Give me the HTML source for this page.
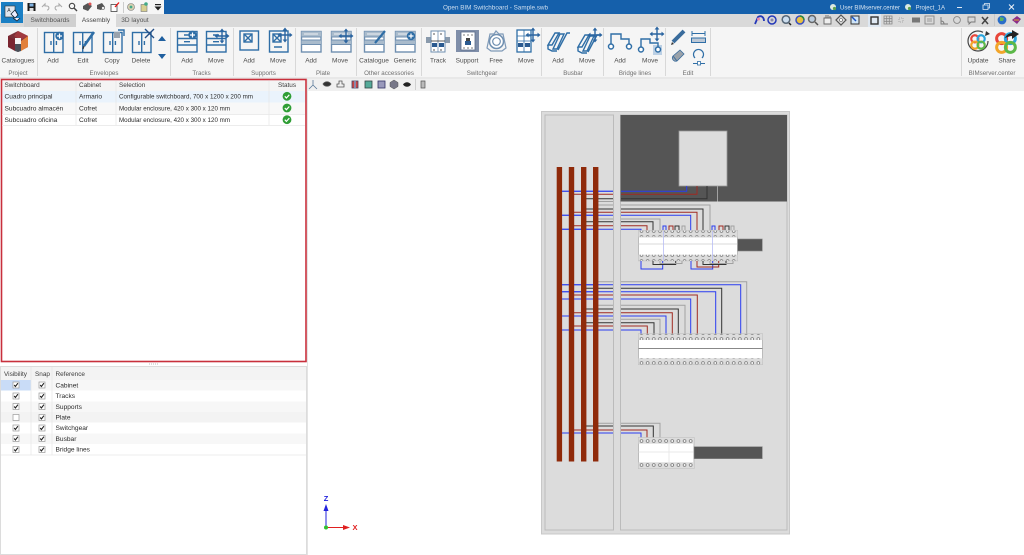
<!DOCTYPE html>
<html><head><meta charset="utf-8"><style>
html,body{margin:0;padding:0;background:#fff;width:1024px;height:555px;overflow:hidden}
svg{display:block;font-family:"Liberation Sans",sans-serif}
text{fill:#444;font-size:6.6px}
.rl{text-anchor:middle;fill:#4d4d4d;font-size:6.5px}
.gl{text-anchor:middle;fill:#707070;font-size:6.2px}
.i{fill:none;stroke:#2f6ea6;stroke-width:1.4}
.w{fill:#fff}
.th{fill:#3c3c3c;font-size:6.4px}
.td{fill:#2c2c2c;font-size:6.6px}
.g{fill:none;stroke:#a2a2a2;stroke-width:1}
.k{fill:none;stroke:#333;stroke-width:1}
.r{fill:none;stroke:#a02a22;stroke-width:1}
.b{fill:none;stroke:#2a3cf0;stroke-width:1}
</style></head><body>
<svg width="1024" height="555" viewBox="0 0 1024 555" xmlns="http://www.w3.org/2000/svg">
<defs>
<g id="door"><rect class="i" x=".5" y=".5" width="18.5" height="20" fill="#fff"/><path class="i" d="M9.7 .5V20.5M7 9V13M12.4 9V13"/></g>
<g id="plus"><circle r="4.2" fill="#2f6ea6"/><path d="M-2.5 0H2.5M0-2.5V2.5" stroke="#fff" stroke-width="1.2"/></g>
<g id="move"><path d="M-6 0H6M0-6V6" stroke="#2a64a0" stroke-width="1.4"/><path d="M0-7.5L-2.4-4.5H2.4ZM0 7.5L-2.4 4.5H2.4ZM-7.5 0L-4.5-2.4V2.4ZM7.5 0L4.5-2.4V2.4Z" fill="#2a64a0"/></g>
<g id="track"><rect class="i" x=".5" y=".5" width="19.5" height="20.5" fill="#fff"/><path class="i" d="M.5 7.5H20M.5 14H20M7 4H13M7 10.7H13"/></g>
<g id="plate"><rect x=".5" y=".5" width="19.5" height="20.5" fill="#fff" stroke="#6f8fb0" stroke-width="1.4"/><rect x=".5" y=".5" width="19.5" height="5.5" fill="#a9bbcc"/><rect x=".5" y="9" width="19.5" height="4.5" fill="#a9bbcc"/><path d="M.5 6H20M.5 9H20M.5 13.5H20" stroke="#6f8fb0"/><path d="M3 3H17" stroke="#fff" stroke-width=".8"/></g>
<g id="busb"><path class="i" d="M1 14L8 2H12L5 14ZM6 18L13 3H17L10 18ZM11 19L20 2H23"/><path class="i" d="M1 14V18L5 20H10"/></g>
<g id="rings" fill="none" stroke-width="2.4"><circle cx="-3.5" cy="-3.5" r="4" stroke="#e8463a"/><circle cx="3.5" cy="-3.5" r="4" stroke="#2aa4dc"/><circle cx="-3.5" cy="3.5" r="4" stroke="#f2a52a"/><circle cx="3.5" cy="3.5" r="4" stroke="#5cb848"/></g>
<g id="cb"><rect x="-3" y="-3" width="6" height="6" fill="#fff" stroke="#999" stroke-width=".7"/><path d="M-1.8 0L-.6 1.5L1.9-1.8" fill="none" stroke="#222" stroke-width="1.1"/></g>
<g id="ok"><circle r="4.4" fill="#2f9e35"/><path d="M-2.2 0L-.6 1.7L2.3-1.5" fill="none" stroke="#fff" stroke-width="1.2"/></g>
<pattern id="term" x="638.5" width="6.15" height="6" patternUnits="userSpaceOnUse"><circle cx="3" cy="3" r="1.4" fill="#fff" stroke="#777" stroke-width=".8"/></pattern>
</defs>

<!-- top bars -->
<rect width="1024" height="14" fill="#1560ab"/>
<rect width="164" height="14" fill="#f6f6f6"/>
<rect y="14" width="1024" height="13" fill="#d9d9d9"/>
<rect y="27" width="1024" height="50" fill="#f5f5f5"/>
<rect y="77" width="1024" height="2" fill="#e8e8e8"/>
<rect x="308" y="79" width="716" height="12" fill="#f0f0f0"/>
<rect x="76" y="14" width="40" height="13" fill="#f5f5f5"/>
<rect x="24" y="14" width="52" height="13" fill="#d0d0d0"/>

<!-- app button -->
<rect x="1" y="2" width="22" height="21" fill="#1a7fc4"/>
<rect x="5" y="6" width="10" height="11" fill="#dfe6ee" stroke="#333" stroke-width=".6"/>
<text x="7.2" y="12" style="font-size:5px;fill:#333">A</text>
<path d="M11 14L15 10L18 15L15 18ZM13 18L17 21L20 18" fill="#eef" stroke="#123" stroke-width=".8"/>

<!-- QAT -->
<rect x="27.500" y="3" width="8" height="8" fill="#1a1a1a"/><rect x="29.500" y="3.500" width="4" height="3" fill="#7fb0df"/><rect x="29.500" y="8" width="4" height="3" fill="#ddd"/>
<path d="M42 7L45 4V6H47C49.500 6 49.500 10 47 10" fill="none" stroke="#aaa" stroke-width="1.1"/>
<path d="M62 7L59 4V6H57C54.500 6 54.500 10 57 10" fill="none" stroke="#aaa" stroke-width="1.1"/>
<circle cx="72" cy="6" r="2.700" fill="none" stroke="#444" stroke-width="1.1"/><path d="M74 8L77 11" stroke="#444" stroke-width="1.400"/>
<path d="M83 6L88 3L92 6L88 11L83 9Z" fill="#555"/><circle cx="90" cy="4" r="1.500" fill="#d55"/>
<path d="M97 5L102 3L105 7L101 10L97 9Z" fill="#555"/><circle cx="103" cy="8" r="1.500" fill="#eee" stroke="#555" stroke-width=".6"/>
<rect x="111" y="4.500" width="6" height="7" fill="#fff" stroke="#444" stroke-width=".8"/><path d="M115 7L119 2.500" stroke="#e11" stroke-width="1.300"/>
<rect x="123" y="2" width="1" height="11" fill="#ccc"/>
<circle cx="131" cy="7" r="3.500" fill="#d8d0b0" stroke="#777" stroke-width=".6"/><circle cx="131" cy="7" r="1.400" fill="#4a8"/>
<rect x="141" y="4.500" width="6" height="7" fill="#d8cf90" stroke="#777" stroke-width=".6"/><circle cx="146" cy="4" r="1.800" fill="#4a8"/>
<rect x="155" y="4" width="6" height="1.200" fill="#222"/><path d="M154.500 6.500H161.500L158 10.500Z" fill="#222"/>

<text x="443" y="9.500" textLength="105" lengthAdjust="spacingAndGlyphs" style="fill:#cfdff0;font-size:6.8px">Open BIM Switchboard - Sample.swb</text>
<circle cx="833" cy="7" r="3" fill="#dce8e0"/><circle cx="834.500" cy="8.500" r="1.600" fill="#5aa050"/>
<text x="840" y="9.500" textLength="60" lengthAdjust="spacingAndGlyphs" style="fill:#d8e5f2;font-size:6.600px">User BIMserver.center</text>
<circle cx="908" cy="7" r="3" fill="#dce8e0"/><circle cx="909.500" cy="8.500" r="1.600" fill="#5aa050"/>
<text x="915.500" y="9.500" textLength="29.500" lengthAdjust="spacingAndGlyphs" style="fill:#d8e5f2;font-size:6.600px">Project_1A</text>
<path d="M957 7.500H962" stroke="#dfe9f4"/>
<path d="M983 5H988V9.500H983ZM984.500 5V3.500H989.500V8H988" fill="none" stroke="#dfe9f4" stroke-width=".8"/>
<path d="M1009 4.500L1014 9.500M1014 4.500L1009 9.500" stroke="#f0f4f9" stroke-width="1"/>

<!-- tabs -->
<text class="rl" x="50" y="22" style="fill:#555">Switchboards</text>
<text class="rl" x="96" y="22" style="fill:#444">Assembly</text>
<text class="rl" x="135" y="22" style="fill:#555">3D layout</text>

<!-- right toolbar icons -->
<rect x="868" y="14" width="13" height="13" fill="#dfe8f2"/>
<g fill="none" stroke-width="1.500">
<path d="M755 24L758 17C761 15 764 17 764 21" stroke="#2438b8" stroke-width="1.800"/><circle cx="758.500" cy="19" r="1.500" fill="#e8a"/>
<circle cx="772" cy="20" r="4" stroke="#2438b8"/><circle cx="772" cy="20" r="1.500" fill="#88a"/>
<circle cx="786" cy="19.500" r="3.800" stroke="#567" fill="#cde"/><path d="M789 23L791 25" stroke="#222"/>
<circle cx="800" cy="20" r="4" stroke="#3a4fc0" fill="#e8c040"/><path d="M800 16A4 4 0 0 1 804 20" stroke="#2a8a3a"/>
<circle cx="812" cy="19" r="3.500" stroke="#666" fill="#bcd"/><path d="M815 22L818 25" stroke="#555"/>
<path d="M824 24V18H831V24Z" stroke="#666" fill="#eee" stroke-width=".9"/><path d="M826 18V15M828 18V15M830 18V16" stroke="#666" stroke-width=".9"/>
<path d="M841 15L846 20L841 25L836 20Z" stroke="#555" stroke-width="1.200" fill="#ddd"/><circle cx="841" cy="20" r="1.500" fill="#fff" stroke="#555" stroke-width=".6"/>
<rect x="851" y="16" width="8" height="8" stroke="#333" stroke-width="1" fill="#cfe4f7"/><path d="M852 17L856 21" stroke="#1a50c0"/>
<rect x="871" y="17" width="7" height="7" stroke="#333" stroke-width="1.400"/>
<path d="M884 16H892V24H884ZM884 18.700H892M884 21.300H892M886.700 16V24M889.300 16V24" stroke="#888" stroke-width=".8"/>
<rect x="899" y="18" width="4" height="4" stroke="#999" stroke-width=".8" stroke-dasharray="1 1"/>
<rect x="912" y="17.500" width="8" height="5" fill="#777" stroke="none"/>
<rect x="925" y="16" width="9" height="8" stroke="#888" stroke-width=".9"/><path d="M927 19H932M927 21H932" stroke="#888" stroke-width=".8"/>
<path d="M941 17V24H948M941 21C943 21 944 22 944 24" stroke="#777" stroke-width=".9"/>
<circle cx="957" cy="20" r="3.400" stroke="#888" stroke-width=".9"/>
<path d="M968 17H975V22H971L969 24V22H968Z" stroke="#777" stroke-width=".9"/>
<path d="M982 17L988 24M988 17L982 24" stroke="#444" stroke-width="1.500"/>
</g>
<rect x="994" y="14" width="1" height="12" fill="#c8c8c8"/>
<circle cx="1002" cy="20" r="4.400" fill="#2a6ec8"/><path d="M1000 17L1004 18L1003 21L1000 21Z" fill="#5ab060"/>
<path d="M1012 20L1017 16L1021 19L1017 24Z" fill="#8a2d8a"/><path d="M1014 20H1019" stroke="#e0a030"/>

<!-- separators -->
<g fill="#d8d8d8">
<rect x="37" y="28" width="1" height="48"/><rect x="170" y="28" width="1" height="48"/><rect x="233" y="28" width="1" height="48"/><rect x="295" y="28" width="1" height="48"/><rect x="356" y="28" width="1" height="48"/><rect x="421" y="28" width="1" height="48"/><rect x="541" y="28" width="1" height="48"/><rect x="603" y="28" width="1" height="48"/><rect x="665" y="28" width="1" height="48"/><rect x="710" y="28" width="1" height="48"/><rect x="961" y="28" width="1" height="48"/>
</g>

<!-- catalogues -->
<path d="M18 31L28 36V47L18 52L8 47V36Z" fill="#7a3038"/>
<path d="M18 31L28 36L21 40L14 36Z" fill="#a13a40"/>
<path d="M28 36V47L21 51V41Z" fill="#e2803a"/>
<path d="M8 36L15 40V51L8 47Z" fill="#7a2530"/>
<path d="M15 40L21 41V51L18 52L15 51Z" fill="#4a4f58"/>
<rect x="15" y="38" width="6" height="6" fill="#f4f4f4"/>

<!-- envelopes -->
<use href="#door" x="44" y="32"/><use href="#plus" x="59.500" y="36"/>
<use href="#door" x="73" y="32"/><path d="M84 46L94 32" stroke="#2f6ea6" stroke-width="2.600"/><path d="M84 46L83 49" stroke="#333" stroke-width="1.200"/>
<use href="#door" x="103" y="32"/><rect x="114" y="32" width="6" height="6" fill="#9aa3ad"/><path d="M118 30H124V36" class="i"/>
<use href="#door" x="132" y="32"/><path d="M145 29L154 38M154 29L145 38" stroke="#244f86" stroke-width="1.400"/>
<path d="M162 36L166 41H158Z" fill="#1f5f9f"/><path d="M162 59L166 54H158Z" fill="#1f5f9f"/>
<!-- tracks -->
<use href="#track" x="177" y="31"/><use href="#plus" x="192.500" y="35"/>
<use href="#track" x="206" y="31"/><use href="#move" x="222" y="36"/>
<!-- supports -->
<rect class="i" x="240" y="31" width="18.500" height="19" fill="#fff"/><rect class="i" x="244" y="34" width="8" height="8"/><path class="i" d="M244 34L252 42M252 34L244 42"/>
<rect class="i" x="269.500" y="31" width="18.500" height="21" fill="#fff"/><rect class="i" x="273" y="34" width="8" height="8"/><path class="i" d="M273 34L281 42M281 34L273 42M274 47H282"/><use href="#move" x="285" y="35"/>
<!-- plate -->
<use href="#plate" x="301" y="31"/><use href="#plate" x="331" y="31"/><use href="#move" x="346" y="36"/>
<!-- other -->
<use href="#plate" x="364" y="31"/><path d="M375 43L385 31" stroke="#2f6ea6" stroke-width="2.200"/>
<use href="#plate" x="395" y="31"/><use href="#plus" x="411" y="36"/>
<!-- switchgear -->
<g id="brk">
<rect x="426" y="37" width="24" height="6" fill="#8a9aac"/>
<rect x="431" y="31" width="14" height="21" fill="#fff" stroke="#6f8fb0"/>
<path d="M438 31V52" stroke="#6f8fb0" stroke-width=".8"/>
<path d="M432 43H437V47H432ZM439 43H444V47H439Z" fill="#2a5a90"/><path d="M431 41H445" stroke="#333" stroke-width=".8"/>
<path d="M433 34H435M440 34H442M433 50H435M440 50H442" stroke="#555"/>
</g>
<rect x="456" y="30" width="23" height="22" fill="#7f8ea9"/>
<rect x="461" y="32" width="14" height="18" fill="#fff" stroke="#5a6c8a" stroke-width=".8"/>
<path d="M465 41H471V45H465Z" fill="#2a5a90"/><path d="M466 38H470V41H466Z" fill="#444"/><path d="M463 35H465M467 35H469M471 35H473M463 48H465M467 48H469M471 48H473" stroke="#555" stroke-width=".8"/>
<circle cx="496.500" cy="41.500" r="7" fill="#fff" stroke="#6f8fb0" stroke-width="1.500"/><circle cx="496.500" cy="41.500" r="3.800" fill="#fff" stroke="#6f8fb0" stroke-width="1.200"/>
<path d="M487 48L490 34H494L496 31L499 34H503L506 48L502 51H491Z" fill="none" stroke="#7f9ab8" stroke-width="1.200"/>
<rect x="517" y="30" width="14" height="22" fill="#fff" stroke="#2f6ea6" stroke-width="1.300"/><path d="M517 36H531M517 41H531M524 30V52" stroke="#2f6ea6" stroke-width=".8"/><path d="M518 43H523V47H518ZM525 43H530V47H525Z" fill="#2a5a90"/><use href="#move" x="533" y="35"/>
<!-- busbar -->
<use href="#busb" x="547" y="31"/><use href="#busb" x="577" y="33"/><use href="#move" x="595" y="35"/>
<!-- bridge -->
<path class="i" d="M611 46V34H621V39H629V46"/><circle cx="611" cy="46.500" r="2.500" fill="#fff" stroke="#2f6ea6" stroke-width="1.500"/><circle cx="629" cy="46.500" r="2.500" fill="#fff" stroke="#2f6ea6" stroke-width="1.500"/>
<rect x="653" y="45" width="9" height="10" fill="#bcd0e4"/>
<path class="i" d="M641 48V39H650V43H658V48"/><circle cx="641" cy="49.500" r="2.500" fill="#fff" stroke="#2f6ea6" stroke-width="1.500"/><circle cx="658" cy="49.500" r="2.500" fill="#fff" stroke="#2f6ea6" stroke-width="1.500"/><use href="#move" x="657" y="34"/>
<!-- edit -->
<path d="M673 42L684 31" stroke="#3a6c9c" stroke-width="4"/><path d="M671 45L672 42L674 44Z" fill="#333"/>
<path d="M673 56L680 50L684 54L677 61C674 62 671 59 673 56Z" fill="#9aa2aa" stroke="#3a6c9c" stroke-width=".8"/><path d="M673 56L677 61" stroke="#3a6c9c" fill="none"/>
<path d="M692 31V36M705 31V36M692 33.500H705" stroke="#2f6ea6"/><rect x="691.500" y="38" width="14" height="4.500" fill="#bcc8d6" stroke="#2f6ea6"/>
<path d="M695 58A5 5 0 1 1 702 58" fill="none" stroke="#2f6ea6" stroke-width="1.200"/><path d="M693 63.500H705" stroke="#2f6ea6"/><rect x="697.500" y="61.500" width="3" height="3.500" fill="#fff" stroke="#2f6ea6" stroke-width=".8"/>
<!-- bim -->
<circle cx="978" cy="41" r="10" fill="none" stroke="#444" stroke-width="1.200" stroke-dasharray="52 11"/>
<path d="M986 31L990 34L985 36Z" fill="#333"/>
<g transform="translate(978,42) scale(.9)"><use href="#rings"/></g>
<g transform="translate(1006,43) scale(1.250)"><use href="#rings"/></g>
<path d="M1005 38C1007 34 1010 33 1012 33V30L1019 34L1012 39V36C1010 36 1008 37 1005 38Z" fill="#222"/>

<!-- ribbon labels -->
<text class="rl" x="18" y="62.500">Catalogues</text>
<text class="rl" x="53" y="62.500">Add</text><text class="rl" x="83" y="62.500">Edit</text><text class="rl" x="112" y="62.500">Copy</text><text class="rl" x="141" y="62.500">Delete</text>
<text class="rl" x="187" y="62.500">Add</text><text class="rl" x="216" y="62.500">Move</text>
<text class="rl" x="249" y="62.500">Add</text><text class="rl" x="278" y="62.500">Move</text>
<text class="rl" x="311" y="62.500">Add</text><text class="rl" x="340" y="62.500">Move</text>
<text class="rl" x="374" y="62.500">Catalogue</text><text class="rl" x="405" y="62.500">Generic</text>
<text class="rl" x="438" y="62.500">Track</text><text class="rl" x="467" y="62.500">Support</text><text class="rl" x="496" y="62.500">Free</text><text class="rl" x="526" y="62.500">Move</text>
<text class="rl" x="558" y="62.500">Add</text><text class="rl" x="587" y="62.500">Move</text>
<text class="rl" x="620" y="62.500">Add</text><text class="rl" x="650" y="62.500">Move</text>
<text class="rl" x="978" y="62.500">Update</text><text class="rl" x="1007" y="62.500">Share</text>
<text class="gl" x="18" y="75">Project</text><text class="gl" x="104" y="75">Envelopes</text><text class="gl" x="201.500" y="75">Tracks</text><text class="gl" x="263.500" y="75">Supports</text><text class="gl" x="323" y="75">Plate</text><text class="gl" x="389" y="75">Other accessories</text><text class="gl" x="482" y="75">Switchgear</text><text class="gl" x="573" y="75">Busbar</text><text class="gl" x="635" y="75">Bridge lines</text><text class="gl" x="688" y="75">Edit</text><text class="gl" x="992" y="75">BIMserver.center</text>

<!-- view toolbar -->
<g fill="none" stroke="#555" stroke-width=".8">
<path d="M313 85V80M313 85L309 89M313 85L317 89" stroke="#5a7a9a"/>
<path d="M323 84C325 81 329 81 331 84C329 87 325 87 323 84Z" fill="#333"/>
<path d="M337 87H344V84H342V81H339V84H337Z"/>
</g>
<rect x="352" y="81" width="6" height="7" fill="#c44" stroke="#446" stroke-width=".8"/><rect x="354" y="81" width="2" height="7" fill="#88a"/>
<rect x="365" y="81" width="7" height="7" fill="#5a9" stroke="#344" stroke-width=".8"/>
<rect x="378" y="81" width="7" height="7" fill="#99b" stroke="#336" stroke-width=".8"/>
<path d="M394 80L398 82.500V86.500L394 89L390 86.500V82.500Z" fill="#778" stroke="#555" stroke-width=".5"/>
<path d="M403 84.500C405 81.500 409 81.500 411 84.500C409 87.500 405 87.500 403 84.500Z" fill="#222"/>
<rect x="415" y="79" width="1" height="11" fill="#d0d0d0"/>
<path d="M421 81H425V88H421Z" fill="#bbb" stroke="#555" stroke-width=".7"/>

<!-- panel 1 -->
<rect x="1.500" y="79.500" width="304.500" height="282" fill="#fff" stroke="#c8303c" stroke-width="1.600"/>
<rect x="2.500" y="80.500" width="302.500" height="10.500" fill="#f4f4f4"/>
<rect x="2.500" y="91" width="302.500" height="11.500" fill="#eaf3fc"/>
<rect x="2.500" y="102.500" width="302.500" height="11.500" fill="#f8f8f8"/>
<path d="M76 81V125M116 81V125M269 81V125M2 114.500H305M2 125.500H305" stroke="#e6e6e6" stroke-width=".7" fill="none"/>
<text class="th" x="4.500" y="87">Switchboard</text><text class="th" x="79" y="87">Cabinet</text><text class="th" x="119" y="87">Selection</text><text class="th" x="287" y="87" text-anchor="middle">Status</text>
<text class="td" x="4.500" y="98.500">Cuadro principal</text><text class="td" x="79" y="98.500">Armario</text><text class="td" x="119" y="98.500" textLength="134" lengthAdjust="spacingAndGlyphs">Configurable switchboard, 700 x 1200 x 200 mm</text>
<text class="td" x="4.500" y="110.300">Subcuadro almacén</text><text class="td" x="79" y="110.300">Cofret</text><text class="td" x="119" y="110.300" textLength="111" lengthAdjust="spacingAndGlyphs">Modular enclosure, 420 x 300 x 120 mm</text>
<text class="td" x="4.500" y="122">Subcuadro oficina</text><text class="td" x="79" y="122">Cofret</text><text class="td" x="119" y="122" textLength="111" lengthAdjust="spacingAndGlyphs">Modular enclosure, 420 x 300 x 120 mm</text>
<use href="#ok" x="287" y="96.300"/><use href="#ok" x="287" y="108"/><use href="#ok" x="287" y="119.700"/>
<path d="M149 364H158" stroke="#bbb" stroke-dasharray="1 1"/>
<rect x="307" y="79" width="1" height="476" fill="#e4e4e4"/>

<!-- panel 2 -->
<rect x=".5" y="366.500" width="306" height="188" fill="#fff" stroke="#dcdcdc"/>
<rect x="1" y="367" width="305" height="13" fill="#f3f3f3"/>
<rect x="1" y="380" width="30" height="10.500" fill="#c9dcf7"/>
<g fill="#f7f7f7"><rect x="31" y="380" width="275" height="10.500"/><rect x="1" y="401.500" width="305" height="10.500"/><rect x="1" y="412" width="305" height="10.500" fill="#f3f3f3"/><rect x="1" y="433.500" width="305" height="10.500"/></g>
<path d="M31 367V455M52 367V455M1 455H306" stroke="#e6e6e6" stroke-width=".7" fill="none"/>
<text class="th" x="4" y="376">Visibility</text><text class="th" x="35" y="376">Snap</text><text class="th" x="55.500" y="376">Reference</text>
<text class="td" x="55.500" y="387.500">Cabinet</text><text class="td" x="55.500" y="398">Tracks</text><text class="td" x="55.500" y="409">Supports</text><text class="td" x="55.500" y="419.500">Plate</text><text class="td" x="55.500" y="430">Switchgear</text><text class="td" x="55.500" y="441">Busbar</text><text class="td" x="55.500" y="451.500">Bridge lines</text>
<use href="#cb" x="16" y="385"/><use href="#cb" x="16" y="396"/><use href="#cb" x="16" y="406.500"/><rect x="13" y="414.500" width="6" height="6" fill="#fff" stroke="#999" stroke-width=".7"/><use href="#cb" x="16" y="428"/><use href="#cb" x="16" y="438.500"/><use href="#cb" x="16" y="449.500"/>
<use href="#cb" x="42" y="385"/><use href="#cb" x="42" y="396"/><use href="#cb" x="42" y="406.500"/><use href="#cb" x="42" y="417.500"/><use href="#cb" x="42" y="428"/><use href="#cb" x="42" y="438.500"/><use href="#cb" x="42" y="449.500"/>

<!-- axis -->
<path d="M326 527.500V508" stroke="#2222dd" stroke-width="1"/><path d="M326 504L323.500 511H328.500Z" fill="#2222dd"/>
<path d="M326 527.500H346" stroke="#e02020" stroke-width="1"/><path d="M350 527.500L343 525V530Z" fill="#e02020"/>
<circle cx="326" cy="527.500" r="2" fill="#30c030"/>
<text x="326" y="501" text-anchor="middle" style="font-size:7.500px;font-weight:bold;fill:#2222dd">Z</text>
<text x="355" y="530" text-anchor="middle" style="font-size:7.500px;font-weight:bold;fill:#e02020">X</text>

<!-- drawing -->
<rect x="541.500" y="111.500" width="248" height="422.500" fill="#dcdcdc" stroke="#c8c8c8"/>
<rect x="545" y="115" width="68.500" height="415" fill="#dcdcdc" stroke="#bbb"/>
<rect x="620.500" y="115" width="166.500" height="415" fill="#dcdcdc" stroke="#bbb"/>
<rect x="620.500" y="115" width="166.500" height="86.500" fill="#555"/>
<rect x="679" y="131" width="48" height="55" fill="#dcdcdc" stroke="#999" stroke-width=".8"/>

<!-- wires: upper -->
<path class="b" d="M559 191.300H613M621 191.300H686.700V186"/>
<path class="r" d="M574 194.300H613M621 194.300H697V186"/>
<path class="k" d="M586 198.700H613M621 198.700H707V186"/>
<path class="g" d="M598 201.500H613M717.500 186V201.500"/>
<path class="g" d="M598 205H613M621 205H710V231"/>
<path class="k" d="M586 209H613M621 209H703V231"/>
<path class="r" d="M574 212.300H613M621 212.300H697V231"/>
<path class="b" d="M562 215.300H613M621 215.300H690.700V231"/>
<path class="g" d="M598 219H613M621 219H660V231"/>
<path class="k" d="M586 221.700H613M621 221.700H653V231"/>
<path class="r" d="M574 225.700H613M621 225.700H647V231"/>
<path class="b" d="M562 229.300H613M621 229.300H641V231"/>
<path class="b" d="M663 230V226H666V230M712 230V226H715V230"/>
<path class="r" d="M669 230V226H673V230M719 230V226H723V230"/>
<path class="k" d="M675 230V226H679V230M725 230V226H729V230"/>
<path class="g" d="M682 230V226H685V230M731 230V226H734V230"/>
<!-- device 1 -->
<rect x="638.500" y="230.700" width="99" height="30" fill="#fff" stroke="#bbb"/>
<rect x="638.500" y="230.700" width="99" height="6" fill="#dcdcdc"/>
<rect x="638.500" y="254.700" width="99" height="6" fill="#dcdcdc"/>
<rect x="638.500" y="230.700" width="99" height="6" fill="url(#term)"/>
<rect x="638.500" y="254.700" width="99" height="6" fill="url(#term)"/>
<path d="M638.500 237H737.500M638.500 244H737.500" stroke="#ccc" stroke-width=".7"/>
<path d="M663.500 231V260M712.500 231V260" stroke="#b8bdf5" stroke-width=".8"/>
<rect x="737.700" y="239" width="24.600" height="12" fill="#555" stroke="#888" stroke-width=".6"/>
<path class="b" d="M641 261V269H662.700V261M691 261V269H712.700V261"/>
<path class="k" d="M653 261V264.500H675.700V261"/>
<path class="g" d="M660 261V263.500H682V261"/>
<path class="r" d="M697 261V267H718.700V261"/>
<path class="k" d="M703 261V264.500H726V261"/>
<path class="g" d="M710 261V263.500H733V261"/>

<!-- wires: middle -->
<path class="g" d="M597 281.700H613M621 281.700H746.700V334"/>
<path class="b" d="M562 284.700H613M621 284.700H740.700V334"/>
<path class="k" d="M586 288.300H613M621 288.300H721.700V334"/>
<path class="b" d="M562 291.700H613M621 291.700H715.700V334"/>
<path class="r" d="M574 295H613M621 295H697.300V334"/>
<path class="b" d="M562 299H613M621 299H690.700V334"/>
<path class="g" d="M597 305.300H613M621 305.300H685V334"/>
<path class="k" d="M586 309H613M621 309H678.300V334"/>
<path class="r" d="M574 312.700H613M621 312.700H672.300V334"/>
<path class="b" d="M562 316H613M621 316H666V334"/>
<path class="g" d="M597 319.300H613M621 319.300H660V334"/>
<path class="k" d="M586 322.700H613M621 322.700H654V334"/>
<path class="r" d="M574 326H613M621 326H647.300V334"/>
<path class="b" d="M562 330H613M621 330H641V334"/>
<!-- device 2 -->
<rect x="638.500" y="334" width="124" height="30.300" fill="#fff" stroke="#bbb"/>
<rect x="638.500" y="334" width="124" height="6" fill="#dcdcdc"/>
<rect x="638.500" y="358.300" width="124" height="6" fill="#dcdcdc"/>
<rect x="638.500" y="334" width="124" height="6" fill="url(#term)"/>
<rect x="638.500" y="358.300" width="124" height="6" fill="url(#term)"/>
<path d="M638.500 348.500H762.500" stroke="#888" stroke-width="1"/>

<!-- wires: lower -->
<path class="g" d="M597 423.300H613M621 423.300H660V438"/>
<path class="k" d="M586 426H613M621 426H653.300V438"/>
<path class="r" d="M574 430H613M621 430H647V438"/>
<path class="b" d="M562 433H613M621 433H641V438"/>
<!-- device 3 -->
<rect x="638.500" y="437.700" width="55.500" height="30.600" fill="#fff" stroke="#bbb"/>
<rect x="638.500" y="437.700" width="55.500" height="6" fill="#dcdcdc"/>
<rect x="638.500" y="462.300" width="55.500" height="6" fill="#dcdcdc"/>
<rect x="638.500" y="437.700" width="55.500" height="6" fill="url(#term)"/>
<rect x="638.500" y="462.300" width="55.500" height="6" fill="url(#term)"/>
<path d="M638.500 452H694M669 444V462" stroke="#e2e2e2" stroke-width=".7"/>
<rect x="694" y="446.700" width="68.300" height="12" fill="#555" stroke="#888" stroke-width=".6"/>

<!-- busbars -->
<g fill="#8f2a0a">
<rect x="556.700" y="167" width="5.400" height="294.500"/>
<rect x="568.800" y="167" width="5.400" height="294.500"/>
<rect x="581" y="167" width="5.400" height="294.500"/>
<rect x="593" y="167" width="5.400" height="294.500"/>
</g>
<!-- crossings over the bars -->
<path d="M574 191.300H581M586 191.300H593M598 191.300H613M574 215.300H581M586 215.300H593M574 229.300H581M586 229.300H593M574 284.700H581M586 284.700H593M574 291.700H581M586 291.700H593M574 299H581M586 299H593M574 316H581M586 316H593M574 330H581M586 330H593M574 433H581M586 433H593M562 191.300H568.800M562 215.300H568.800M562 229.300H568.800M562 284.700H568.800M562 291.700H568.800M562 299H568.800M562 316H568.800M562 330H568.800M562 433H568.800" class="b"/>
</svg>
</body></html>
